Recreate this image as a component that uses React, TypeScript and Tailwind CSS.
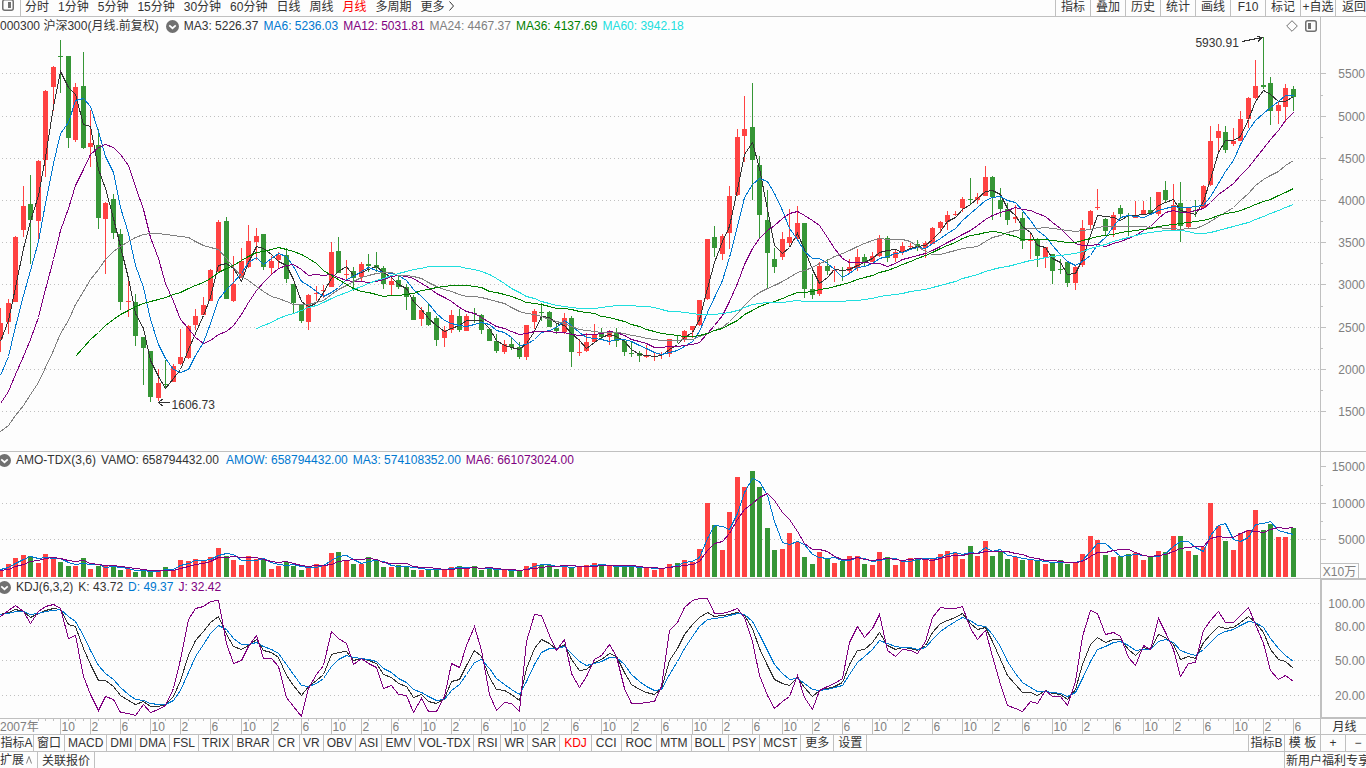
import type { ReactNode } from 'react'

const RED = '#ff4242'
const GREEN = '#369636'
const INK = '#333333'
const BLUE = '#0078d0'
const PURPLE = '#800080'
const GRAY = '#808080'
const LINE = '#c0c0c0'

const CHART_W = 1320

// month end closes before the first visible candle, 2005-01 to 2007-01
const earlierCloses = [
    955, 1044, 947, 932, 855, 878, 888, 927, 917, 876, 873, 923, 1009, 1053, 1061, 1172, 1365, 1394, 1294, 1338, 1403,
    1464, 1714, 2041, 2385,
]
const earlierHighs = [1410, 1483, 1720, 2052, 2744]
const earlierLows = [1320, 1400, 1450, 1713, 2030]

// colour, high, body top, body bottom, low (y in the chart, one per month)
const candleRows = `
r308,323,339,352 r299,303,322,334 r236,237,302,302 r186,206,230,237 g175,204,220,264 r160,161,221,241
r90,91,160,177 r66,67,87,111 g40,56,57,93 g56,56,138,148 r83,87,140,142 g52,86,148,149
r110,143,147,167 g129,145,218,229 r202,203,219,274 g194,199,233,239 g229,234,302,310 r281,301,302,317
g294,302,336,346 g337,337,348,385 g351,351,397,402 r369,383,398,401 g360,384,385,388 r364,366,382,382
r329,357,364,365 r325,326,358,359 r309,316,325,330 r297,305,315,315 r269,270,301,301 r220,222,272,272
g217,221,299,299 r256,284,301,302 r248,261,278,278 r225,241,267,268 r228,236,242,260 g234,234,267,270
r256,261,268,275 r252,255,260,269 g248,255,279,283 g284,284,303,313 g305,305,321,323 r294,295,322,330
r286,293,294,301 r285,290,291,298 r242,252,287,287 g237,251,273,273 r260,274,275,280 g267,271,278,291
r262,264,277,281 g254,264,266,272 g252,265,268,272 g266,268,284,289 r277,281,285,295 g275,280,287,289
g284,287,297,310 g295,297,320,320 r307,310,319,326 g303,312,325,326 g316,318,340,346 r326,330,338,347
r310,315,330,333 g309,316,330,332 r314,316,331,331 g308,313,314,323 g314,315,330,334 g329,329,341,341
g334,341,351,353 r340,344,352,354 g338,344,347,350 g342,347,357,359 r325,325,357,360 r309,311,322,329
g303,312,313,321 g311,312,327,327 g323,328,331,334 r313,318,332,334 g316,318,352,367 r339,352,353,356
r333,342,351,352 r324,334,342,343 g328,333,337,340 r330,332,337,345 g328,333,341,347 g340,341,352,356
g341,353,354,357 g351,353,356,362 r345,356,357,358 r352,356,357,361 r352,354,355,359 r339,339,354,357
g336,340,341,343 r330,331,340,342 r326,326,330,338 r300,300,325,326 r239,239,299,300 g226,237,248,257
r234,236,254,260 r186,196,233,249 r129,137,195,196 r96,129,136,162 g83,127,160,200 g156,165,215,238
g190,220,253,288 g248,259,267,273 r232,239,257,260 r209,237,243,246 r206,223,239,240 g223,223,289,298
g274,289,295,299 r262,266,294,296 g259,266,271,275 r266,270,271,282 g267,270,271,281 r259,267,271,273
r249,257,268,271 g254,257,262,266 r252,256,262,262 r235,238,256,257 g236,238,258,262 r250,252,258,262
r242,246,252,255 r243,246,247,249 g240,244,247,251 r241,243,248,258 r227,228,244,244 r221,222,228,233
r211,215,222,230 r211,214,215,216 r197,199,208,212 g178,199,200,204 r193,197,200,204 r166,177,196,196
g176,177,197,220 g188,200,209,217 g203,209,220,225 r205,217,219,223 g212,218,241,249 r233,240,241,259
g238,240,256,267 r247,247,257,268 g254,254,271,284 g259,269,270,274 g262,262,283,287 r265,267,283,290
r220,228,265,267 r210,211,225,229 r189,207,208,210 g218,219,231,236 r212,215,230,237 g205,208,214,219
g213,215,216,236 r201,216,218,218 r201,210,215,215 g197,210,214,214 r192,192,214,216 g181,190,200,202
r184,205,230,230 g182,203,226,242 r207,207,227,229 g200,210,211,217 r185,186,208,208 r126,141,185,186
r124,131,138,152 g126,132,150,153 r128,141,144,146 r111,119,141,141 r97,98,119,128 r60,86,98,99
g37,85,87,89 g77,83,111,125 r102,105,111,124 r84,88,107,122 g86,89,97,111
`

const volumes = [
    8, 13, 19, 22, 21, 14, 23, 18, 15, 11, 11, 19, 8, 11, 11, 10, 7, 8, 5, 6, 5, 7, 10, 7, 17, 16, 18, 16, 20, 29, 21,
    17, 12, 21, 18, 18, 8, 11, 15, 11, 7, 10, 13, 12, 24, 25, 16, 13, 13, 20, 16, 10, 10, 12, 11, 7, 7, 8, 8, 7, 10, 11,
    8, 11, 7, 8, 7, 7, 7, 6, 11, 14, 12, 12, 8, 12, 10, 10, 12, 14, 11, 11, 11, 10, 10, 9, 9, 7, 9, 13, 14, 17, 15, 28,
    74, 52, 27, 65, 100, 90, 106, 90, 49, 27, 28, 44, 35, 20, 13, 25, 19, 14, 16, 21, 21, 13, 12, 25, 20, 12, 16, 19, 19,
    17, 19, 23, 26, 24, 18, 31, 21, 36, 21, 25, 18, 20, 17, 17, 16, 13, 14, 17, 13, 14, 23, 41, 37, 22, 20, 21, 23, 24,
    17, 20, 26, 25, 41, 41, 26, 22, 30, 74, 51, 36, 27, 44, 47, 67, 47, 53, 40, 40, 49,
]

type Candle = { up: boolean; high: number; top: number; bottom: number; low: number }

const candles: Candle[] = candleRows
    .trim()
    .split(/\s+/)
    .map((row) => {
        const [high, top, bottom, low] = row.slice(1).split(',').map(Number)
        return { up: row[0] === 'r', high, top, bottom, low }
    })

const xAt = (i: number) => Math.floor(7.517 * i + 0.5)
const priceY = (p: number) => 73.5 + (5500 - p) * 0.0845

const closes = candles.map((c) => (c.up ? c.top : c.bottom))

function average(values: number[], before: number[], n: number) {
    const all = [...before, ...values]
    const points: string[] = []
    values.forEach((_, i) => {
        const end = i + before.length + 1
        if (end < n) return
        const sum = all.slice(end - n, end).reduce((a, b) => a + b, 0)
        points.push(`${xAt(i) + 0.5},${Math.floor(sum / n) + 0.5}`)
    })
    return points.join(' ')
}

function kdj() {
    const highs = [...earlierHighs.map(priceY), ...candles.map((c) => c.high)]
    const lows = [...earlierLows.map(priceY), ...candles.map((c) => c.low)]
    let k = 92
    let d = 91
    const out = { k: [] as string[], d: [] as string[], j: [] as string[] }
    closes.forEach((close, i) => {
        const top = Math.min(...highs.slice(i, i + 6))
        const bottom = Math.max(...lows.slice(i, i + 6))
        k = (2 * k + ((bottom - close) / (bottom - top)) * 100) / 3
        d = (d + k) / 2
        const point = (v: number) => `${xAt(i) + 0.5},${Math.floor(8.5 + (100 - v) * 1.15) + 0.5}`
        out.k.push(point(k))
        out.d.push(point(d))
        out.j.push(point(3 * k - 2 * d))
    })
    return out
}

const before = earlierCloses.map(priceY)
const priceLines = [
    { color: INK, points: average(closes, before, 3) },
    { color: BLUE, points: average(closes, before, 6) },
    { color: PURPLE, points: average(closes, before, 12) },
    { color: GRAY, points: average(closes, before, 24) },
    { color: '#008000', points: average(closes, before, 36) },
    { color: '#20dede', points: average(closes, before, 60) },
]

const volumeTops = volumes.map((v) => 109 - v)
const volumeBefore = [104, 103, 103, 102, 101]
const volumeLines = [
    { color: BLUE, points: average(volumeTops, volumeBefore, 3) },
    { color: PURPLE, points: average(volumeTops, volumeBefore, 6) },
]

const { k, d, j } = kdj()
const kdjLines = [
    { color: INK, points: k.join(' ') },
    { color: BLUE, points: d.join(' ') },
    { color: PURPLE, points: j.join(' ') },
]

type PlotProps = {
    y: number
    height: number
    grid: number[]
    lines: { color: string; points: string }[]
    children?: ReactNode
}

function Plot({ y, height, grid, lines, children }: PlotProps) {
    return (
        <svg
            className="block h-full w-full"
            viewBox={`0 ${y} ${CHART_W} ${height}`}
            preserveAspectRatio="none"
            shapeRendering="crispEdges"
            aria-hidden="true"
        >
            {grid.map((g) => (
                <line key={g} x1="2" x2={CHART_W} y1={g + 0.5} y2={g + 0.5} stroke={LINE} strokeDasharray="1 3" />
            ))}
            {children}
            {lines.map((l, i) => (
                <polyline key={i} points={l.points} fill="none" stroke={l.color} />
            ))}
        </svg>
    )
}

type AxisProps = { y: number; height: number; labels: [string, number][]; major?: number[]; minor?: number[] }

function Axis({ y, height, labels, major = [], minor = [] }: AxisProps) {
    const at = (v: number) => `${((v + 0.5 - y) / height) * 100}%`
    return (
        <svg className="block h-full w-full" aria-hidden="true">
            {major.map((v) => (
                <line key={v} x1="0" x2="5" y1={at(v)} y2={at(v)} stroke={LINE} shapeRendering="crispEdges" />
            ))}
            {minor.map((v) => (
                <line key={v} x1="0" x2="2" y1={at(v)} y2={at(v)} stroke={LINE} shapeRendering="crispEdges" />
            ))}
            {labels.map(([text, v]) => (
                <text key={text} x="100%" y={at(v)} dx="-1" dy="4" textAnchor="end" fontSize="12" fill={GRAY}>
                    {text}
                </text>
            ))}
        </svg>
    )
}

function Toggle({ label }: { label: string }) {
    return (
        <button aria-label={label} className="shrink-0">
            <svg className="block size-[13px]" viewBox="0 0 12 12">
                <circle cx="6" cy="6" r="6" fill="#707070" />
                <path d="M3 5l3 2.6L9 5" fill="none" stroke="#fff" strokeWidth="1.6" />
            </svg>
        </button>
    )
}

const periods = ['分时', '1分钟', '5分钟', '15分钟', '30分钟', '60分钟', '日线', '周线', '月线', '多周期']
const tools = ['指标', '叠加', '历史', '统计', '画线', 'F10', '标记', '+自选']

function Toolbar() {
    return (
        <header className="flex h-[17px] shrink-0 justify-between overflow-hidden border-b border-[#c0c0c0] leading-[14px] whitespace-nowrap">
            <nav className="flex">
                <button aria-label="侧栏" className="mr-1 w-[21px] border-r border-[#c0c0c0] pl-0.5">
                    <svg className="block h-4 w-3" viewBox="0 0 12 16">
                        <rect x="0.75" y="-0.25" width="10.5" height="10.5" rx="2" fill="none" stroke="#707070" strokeWidth="1.5" />
                        <rect x="6" y="2" width="3" height="6" fill="#707070" />
                    </svg>
                </button>
                <div className="flex items-start gap-[9px]">
                    {periods.map((p) => (
                        <button key={p} className={p === '月线' ? 'text-[#ff0000]' : ''}>
                            {p}
                        </button>
                    ))}
                    <button className="flex">
                        更多
                        <svg className="ml-1 block h-3 w-1.5" viewBox="0 0 6 12" fill="none" stroke="#333333">
                            <path d="M0.5 1.5l4 4.5-4 4.5" />
                        </svg>
                    </button>
                </div>
            </nav>
            <div className="flex">
                {tools.map((t) => (
                    <button key={t} className="flex w-[35px] justify-center border-l border-[#c0c0c0]">
                        {t}
                    </button>
                ))}
                <button className="flex w-[31px] justify-end border-l border-[#c0c0c0]">返回</button>
            </div>
        </header>
    )
}

function PricePanel() {
    return (
        <section className="flex min-h-0 flex-1 border-b border-[#c0c0c0]">
            <div className="flex min-w-0 flex-1 flex-col">
                <div className="flex h-[18px] shrink-0 items-center gap-[5px] overflow-hidden whitespace-nowrap">
                    <h1 className="pr-0.5">000300 沪深300(月线.前复权)</h1>
                    <Toggle label="主图指标" />
                    <span>MA3: 5226.37</span>
                    <span className="text-[#0078d0]">MA6: 5236.03</span>
                    <span className="text-[#800080]">MA12: 5031.81</span>
                    <span className="text-[#808080]">MA24: 4467.37</span>
                    <span className="text-[#008000]">MA36: 4137.69</span>
                    <span className="text-[#20dede]">MA60: 3942.18</span>
                    <button aria-label="标注" className="mr-0.5 ml-auto">
                        <svg className="block size-3" viewBox="0 0 12 12" fill="none" stroke="#707070">
                            <path d="M6 0.7L11.3 6 6 11.3 0.7 6z" />
                        </svg>
                    </button>
                    <button aria-label="布局" className="mr-[3px]">
                        <svg className="block size-3" viewBox="0 0 12 12">
                            <rect x="0.75" y="0.75" width="10.5" height="10.5" rx="2" fill="none" stroke="#707070" strokeWidth="1.5" />
                            <rect x="3" y="3" width="3" height="6" fill="#707070" />
                        </svg>
                    </button>
                </div>
                <div className="relative min-h-0 flex-1">
                    <Plot y={35} height={416} grid={[73, 116, 158, 200, 242, 284, 327, 369, 411]} lines={priceLines}>
                        {candles.map((c, i) => (
                            <g key={i} fill={c.up ? RED : GREEN}>
                                <rect x={xAt(i)} y={c.high} width="1" height={c.low - c.high} />
                                <rect x={xAt(i) - 2} y={c.top} width="5" height={c.bottom - c.top} />
                            </g>
                        ))}
                        <path d="M158 402.5h12M162.5 399l-4 3.5 4 3.5" fill="none" stroke={INK} />
                        <path d="M1242 41.5l20-4M1257 36l5 1.5-4 4" fill="none" stroke={INK} />
                    </Plot>
                    <span className="absolute top-[87%] left-[13%] leading-4">1606.73</span>
                    <span className="absolute top-0 right-[6%] pr-0.5 leading-4">5930.91</span>
                </div>
            </div>
            <div className="w-[46px] shrink-0 border-l border-[#c0c0c0]">
                <Axis
                    y={17}
                    height={434}
                    labels={[
                        ['5500', 73],
                        ['5000', 116],
                        ['4500', 158],
                        ['4000', 200],
                        ['3500', 242],
                        ['3000', 284],
                        ['2500', 327],
                        ['2000', 369],
                        ['1500', 411],
                    ]}
                    major={[73, 116, 158, 200, 242, 284, 327, 369, 411]}
                    minor={[95, 137, 179, 221, 263, 306, 348, 390]}
                />
            </div>
        </section>
    )
}

function VolumePanel() {
    return (
        <section className="flex h-[127px] shrink-0 border-b border-[#c0c0c0]">
            <div className="flex min-w-0 flex-1 flex-col">
                <div className="-ml-0.5 flex h-4 shrink-0 items-center gap-[5px] overflow-hidden whitespace-nowrap">
                    <Toggle label="成交额指标" />
                    <span>AMO-TDX(3,6)</span>
                    <span className="mr-0.5">VAMO: 658794432.00</span>
                    <span className="text-[#0078d0]">AMOW: 658794432.00</span>
                    <span className="text-[#0078d0]">MA3: 574108352.00</span>
                    <span className="text-[#800080]">MA6: 661073024.00</span>
                </div>
                <div className="min-h-0 flex-1">
                    <Plot y={0} height={110} grid={[35, 71]} lines={volumeLines}>
                        {volumes.map((v, i) => (
                            <rect key={i} x={xAt(i) - 2} y={109 - v} width="5" height={v} fill={candles[i].up ? RED : GREEN} />
                        ))}
                    </Plot>
                </div>
            </div>
            <div className="flex w-[46px] shrink-0 flex-col border-l border-[#c0c0c0]">
                <div className="min-h-0 flex-1">
                    <Axis
                        y={452}
                        height={111}
                        labels={[
                            ['15000', 466],
                            ['10000', 503],
                            ['5000', 539],
                        ]}
                        major={[466, 503, 539]}
                        minor={[485, 521]}
                    />
                </div>
                <div className="mr-[7px] h-[15px] border-t border-r border-[#c0c0c0] text-center leading-4 text-[#808080]">X10万</div>
            </div>
        </section>
    )
}

function KdjPanel() {
    return (
        <section className="flex h-[140px] shrink-0 border-b border-[#c0c0c0]">
            <div className="flex min-w-0 flex-1 flex-col">
                <div className="-ml-0.5 flex h-4 shrink-0 items-center gap-[5px] overflow-hidden whitespace-nowrap">
                    <Toggle label="KDJ指标" />
                    <span>KDJ(6,3,2)</span>
                    <span>K: 43.72</span>
                    <span className="text-[#0078d0]">D: 49.37</span>
                    <span className="text-[#800080]">J: 32.42</span>
                </div>
                <div className="min-h-0 flex-1">
                    <Plot y={0} height={123} grid={[8, 31, 65, 100]} lines={kdjLines} />
                </div>
            </div>
            <div className="w-[46px] shrink-0 border-t border-b border-l-2 border-[#c0c0c0]">
                <Axis
                    y={580}
                    height={137}
                    labels={[
                        ['100.00', 603],
                        ['80.00', 626],
                        ['50.00', 660],
                        ['20.00', 695],
                    ]}
                />
            </div>
        </section>
    )
}

function DateAxis() {
    const at = (i: number) => `${((xAt(i) + 0.5) / CHART_W) * 100}%`
    return (
        <div className="flex h-4 shrink-0 border-b border-[#c0c0c0]">
            <svg className="block h-full min-w-0 flex-1" aria-hidden="true">
                <text x="0" y="12" fontSize="12" fill={GRAY}>
                    2007年
                </text>
                {candles.map((_, i) => {
                    if (i < 5) return null
                    const labelled = i >= 8 && i % 4 === 0
                    return (
                        <g key={i}>
                            <line x1={at(i)} x2={at(i)} y1="0" y2={labelled ? 15 : 2} stroke={LINE} shapeRendering="crispEdges" />
                            {labelled && (
                                <text x={at(i)} dx="1" y="12" fontSize="12" fill={GRAY}>
                                    {[2, 6, 10][(i / 4) % 3]}
                                </text>
                            )}
                        </g>
                    )
                })}
            </svg>
            <button className="w-[46px] shrink-0 border-l border-[#c0c0c0] pl-0.5 leading-4">月线</button>
        </div>
    )
}

const indicators = [
    'MACD', 'DMI', 'DMA', 'FSL', 'TRIX', 'BRAR', 'CR', 'VR', 'OBV', 'ASI', 'EMV', 'VOL-TDX', 'RSI', 'WR', 'SAR',
    'KDJ', 'CCI', 'ROC', 'MTM', 'BOLL', 'PSY', 'MCST', '更多', '设置',
]
const roomy = ['CR', 'KDJ', 'CCI', 'ROC', '更多', '设置']

function IndicatorTabs() {
    return (
        <div className="flex h-[17px] shrink-0 justify-between overflow-hidden border-b border-[#c0c0c0] leading-4 whitespace-nowrap">
            <nav className="flex">
                <button className="w-[34px] border-r border-[#c0c0c0]">指标A</button>
                <button className="border-r border-[#c0c0c0] px-[3px]">窗口</button>
                {indicators.map((name) => (
                    <button
                        key={name}
                        className={`border-r border-[#c0c0c0] ${roomy.includes(name) ? 'px-1' : 'px-[3px]'} ${name === 'KDJ' ? 'text-[#ff0000]' : ''}`}
                    >
                        {name}
                    </button>
                ))}
            </nav>
            <div className="flex">
                <button className="w-9 border-l border-[#c0c0c0]">指标B</button>
                <button className="w-9 border-l border-[#c0c0c0]">模 板</button>
                <button className="w-[25px] border-l border-[#c0c0c0]">+</button>
                <button className="w-[21px] border-l border-[#c0c0c0] pl-1">−</button>
            </div>
        </div>
    )
}

function Footer() {
    return (
        <footer className="flex h-4 shrink-0 justify-between overflow-hidden leading-[18px] whitespace-nowrap">
            <div className="flex">
                <button className="flex w-[38px] items-center border-r border-[#c0c0c0]">
                    扩展
                    <svg className="ml-0.5 block h-2 w-1.5" viewBox="0 0 6 8" fill="none" stroke="#808080">
                        <path d="M0.5 7.5L3 0.5l2.5 7" />
                    </svg>
                </button>
                <button className="border-r border-[#c0c0c0] px-1">关联报价</button>
            </div>
            <a href="#" className="w-[82px] overflow-hidden border-l border-[#c0c0c0] pl-px">
                新用户福利专享
            </a>
        </footer>
    )
}

export default function App() {
    return (
        <main className="flex h-screen flex-col overflow-hidden bg-[#fdfdfd] font-['Liberation_Sans','Noto_Sans_CJK_SC',sans-serif] text-[12px] leading-4 text-[#333333]">
            <Toolbar />
            <PricePanel />
            <VolumePanel />
            <KdjPanel />
            <DateAxis />
            <IndicatorTabs />
            <Footer />
        </main>
    )
}
